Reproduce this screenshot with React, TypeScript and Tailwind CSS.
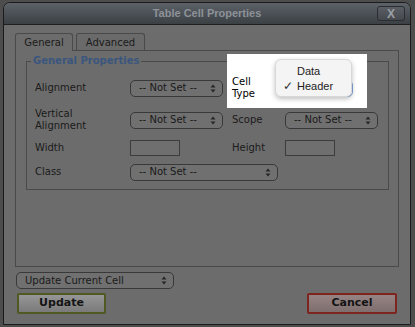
import React from "react";

/* ─── small pieces ─────────────────────────────────────────────── */
function Arrows() {
  return (
    <svg width="6" height="9" viewBox="0 0 6 9" className="shrink-0">
      <path d="M3 0.5 L5.5 3.5 H0.5 Z" fill="#262626" />
      <path d="M3 8.5 L5.5 5.5 H0.5 Z" fill="#262626" />
    </svg>
  );
}

function Select({ label, className }: { label: string; className?: string }) {
  return (
    <div
      className={
        "h-[17px] flex items-center justify-between pl-[8px] pr-[6px] border border-[#393939] rounded-[5px] bg-[#707070] text-[10px] leading-none text-[#1a1a1a] " +
        (className ?? "")
      }
    >
      <span>{label}</span>
      <Arrows />
    </div>
  );
}

function TextBox() {
  return <div className="w-[50px] h-[16px] border border-[#3c3c3c] bg-[#6f6f6f]" />;
}

/* ─── dialog ───────────────────────────────────────────────────── */
export default function App() {
  return (
    <div
      className="w-[415px] h-[327px] overflow-hidden bg-[#4d4d4d] pt-[2px] pl-[3px]"
      style={{ fontFamily: '"DejaVu Sans", Verdana, sans-serif' }}
    >
      <div className="w-[408px] h-[323px] flex flex-col border border-[#1b1b1b] rounded-t-[7px] bg-[#6c6c6c] overflow-hidden">
        {/* Title bar */}
        <div className="relative h-[22px] shrink-0 flex items-center justify-center bg-gradient-to-b from-[#5c6268] to-[#3b4045] border-b border-[#1d2023]">
          <span className="text-[11px] font-bold text-[#8d9298] font-['Liberation_Sans',Arial,sans-serif]">
            Table Cell Properties
          </span>
          <div className="absolute right-[5px] top-[3px] w-[28px] h-[15px] flex items-center justify-center rounded-[3px] border border-[#2a2e32] bg-gradient-to-b from-[#5a5f65] to-[#45494e]">
            <span className="text-[12px] font-bold leading-none text-[#9a9fa5] font-['Liberation_Sans',Arial,sans-serif]">
              X
            </span>
          </div>
        </div>

        {/* Body */}
        <div className="flex-1 flex flex-col px-[11px] pt-[8px]">
          {/* Tabs */}
          <div className="flex items-end gap-[3px] h-[17px] text-[10px] text-[#1b1b1b]">
            <div className="relative z-10 -mb-px w-[58px] h-[18px] flex items-center justify-center border border-b-0 border-[#4a4a4a] rounded-t-[3px] bg-[#6c6c6c]">
              General
            </div>
            <div className="w-[69px] h-[17px] flex items-center justify-center border border-b-0 border-[#4a4a4a] rounded-t-[3px] bg-[#6a6a6a]">
              Advanced
            </div>
          </div>

          {/* Tab panel */}
          <div className="h-[217px] border border-[#4a4a4a] pt-[4px] pl-[10px] pr-[9px]">
            <fieldset className="border border-[#4a4a4a] pt-[9px] pb-[8px]">
              <legend className="ml-[4px] px-[2px] text-[10px] leading-[12px] font-bold text-[#3a567e]">
                General Properties
              </legend>

              <div className="grid grid-cols-[95px_102px_53px_1fr] grid-rows-[24px_24px_16px_17px] gap-y-[8px] pl-[8px] text-[10px] leading-[12px] text-[#1b1b1b]">
                {/* Row 1 */}
                <div className="flex items-center">Alignment</div>
                <div className="flex items-center">
                  <Select label="-- Not Set --" className="w-[93px]" />
                </div>
                <div className="relative flex items-center">
                  <div className="absolute left-[-5px] top-[-22px] w-[140px] h-[54px] bg-white" />
                  <span className="relative z-10 text-black">
                    Cell
                    <br />
                    Type
                  </span>
                </div>
                <div className="relative flex items-center">
                  <div className="w-[68px] h-[17px] rounded-[5px] border border-[#7fa6d8] bg-white" />
                  <div className="absolute z-20 left-[-10px] top-[-17px] w-[77px] h-[38px] rounded-[6px] bg-[#f4f4f4] border border-[#d8d8d8] shadow-[0_2px_5px_rgba(0,0,0,0.25)] font-['Liberation_Sans',Arial,sans-serif] text-[11px] text-[#222] pt-[4px]">
                    <div className="h-[14px] flex items-center pl-[21px]">Data</div>
                    <div className="h-[16px] flex items-center">
                      <span className="w-[21px] pl-[7px] text-[12px] text-[#333]">✓</span>
                      Header
                    </div>
                  </div>
                </div>

                {/* Row 2 */}
                <div className="flex items-center">
                  Vertical
                  <br />
                  Alignment
                </div>
                <div className="flex items-center">
                  <Select label="-- Not Set --" className="w-[93px]" />
                </div>
                <div className="flex items-center">Scope</div>
                <div className="flex items-center">
                  <Select label="-- Not Set --" className="w-[93px]" />
                </div>

                {/* Row 3 */}
                <div className="flex items-center">Width</div>
                <div className="flex items-center">
                  <TextBox />
                </div>
                <div className="flex items-center">Height</div>
                <div className="flex items-center">
                  <TextBox />
                </div>

                {/* Row 4 */}
                <div className="flex items-center -mt-[1px]">Class</div>
                <div className="col-span-3 flex items-center -mt-[1px]">
                  <Select label="-- Not Set --" className="w-[148px]" />
                </div>
              </div>
            </fieldset>
          </div>

          {/* Apply scope */}
          <div className="mt-[5px] ml-[1px]">
            <Select label="Update Current Cell" className="w-[158px]" />
          </div>

          {/* Buttons */}
          <div className="mt-[4px] flex justify-between pl-[2px] pr-[2px]">
            <div className="w-[89px] h-[21px] flex items-center justify-center border-2 border-[#4f5a22] rounded-[2px] bg-gradient-to-b from-[#969696] to-[#7a7a7a] text-[11px] font-bold text-[#141414]">
              Update
            </div>
            <div className="w-[90px] h-[21px] flex items-center justify-center border-2 border-[#7c241d] rounded-[2px] bg-gradient-to-b from-[#958483] to-[#7e6e6d] text-[11px] font-bold text-[#141414]">
              Cancel
            </div>
          </div>
        </div>
      </div>
    </div>
  );
}
